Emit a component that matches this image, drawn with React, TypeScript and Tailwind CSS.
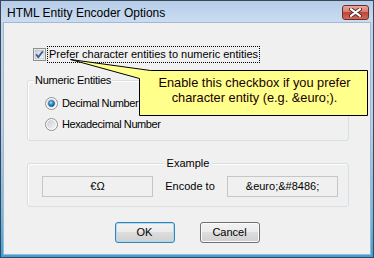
import React from 'react';

function CheckBox() {
  return (
    <svg width="13" height="13" viewBox="0 0 13 13" className="shrink-0">
      <defs>
        <linearGradient id="cbfill" x1="0" y1="0" x2="1" y2="1">
          <stop offset="0" stopColor="#cbcfd5" />
          <stop offset="1" stopColor="#f7f7f7" />
        </linearGradient>
      </defs>
      <rect x="0.5" y="0.5" width="12" height="12" fill="#fff" stroke="#8e8f8f" />
      <rect x="2" y="2" width="9" height="9" fill="url(#cbfill)" stroke="#a8aaad" strokeWidth="0.6" />
      <path d="M3.2 6.4 L5.3 9.2 L9.8 3.2" fill="none" stroke="#3a5aa0" strokeWidth="1.8" strokeLinejoin="round" />
    </svg>
  );
}

function Radio({ checked }: { checked?: boolean }) {
  return (
    <svg width="13" height="13" viewBox="0 0 13 13" className="shrink-0">
      <defs>
        <linearGradient id="rbfill" x1="0" y1="0" x2="1" y2="1">
          <stop offset="0" stopColor="#c9ccd1" />
          <stop offset="1" stopColor="#f8f8f8" />
        </linearGradient>
        <radialGradient id="rbdot" cx="0.4" cy="0.35" r="0.7">
          <stop offset="0" stopColor="#9ae0ff" />
          <stop offset="0.5" stopColor="#2a8fd0" />
          <stop offset="1" stopColor="#0b4f89" />
        </radialGradient>
      </defs>
      <circle cx="6.5" cy="6.5" r="6" fill="#fff" stroke="#8e8f8f" />
      <circle cx="6.5" cy="6.5" r="4.6" fill="url(#rbfill)" />
      {checked && <circle cx="6.5" cy="6.5" r="3.1" fill="url(#rbdot)" stroke="#1b4f7e" strokeWidth="0.6" />}
    </svg>
  );
}

function Button({ label, focused }: { label: string; focused?: boolean }) {
  return (
    <button
      className={`w-[60px] h-[21px] rounded-[3px] border text-[11px] text-black bg-[linear-gradient(#f3f3f3_0%,#ebebeb_45%,#dddddd_50%,#cfcfcf_100%)] ${
        focused ? 'border-[#3c7fb1] shadow-[inset_0_0_0_1px_#a6def8]' : 'border-[#707070] shadow-[inset_0_0_0_1px_#fbfbfb]'
      }`}
    >
      {label}
    </button>
  );
}

export default function App() {
  return (
    <div className="relative w-[374px] h-[258px] flex flex-col border border-[#3b4756] bg-[linear-gradient(#c3d6ee_0%,#b8cfea_50%,#6fb7e0_85%,#2fa4dc_100%)] font-['Liberation_Sans',Arial,sans-serif] text-black">
      {/* title bar */}
      <div className="h-[21px] flex items-start justify-between pl-[6px] pr-[4px] bg-[linear-gradient(#b6cde8,#cadcf1)]">
        <span className="mt-[4px] text-[12px] leading-[16px]">HTML Entity Encoder Options</span>
        <div className="mt-[4px] w-[27px] h-[15px] rounded-[3px] border border-[#6e2d2d] bg-[linear-gradient(#e8a9a0_0%,#d77a6d_45%,#c0453a_50%,#cf6a58_100%)] flex items-center justify-center">
          <svg width="13" height="9" viewBox="0 0 13 9">
            <path d="M2 1.2 L11 7.8 M11 1.2 L2 7.8" stroke="#5a2020" strokeWidth="4" strokeLinecap="round" />
            <path d="M2 1.2 L11 7.8 M11 1.2 L2 7.8" stroke="#fff" strokeWidth="2.2" strokeLinecap="round" />
          </svg>
        </div>
      </div>

      {/* client area */}
      <div className="mx-[2px] mb-[2px] flex-1 border border-[#a3b8d0] bg-[#f0f0f0] flex flex-col text-[11px]">
        <div className="mt-[23px] ml-[29px] h-[17px] flex items-center gap-[1px]">
          <CheckBox />
          <span className="h-[17px] px-[1px] flex items-center border border-dotted border-black leading-[13px]">
            Prefer character entities to numeric entities
          </span>
        </div>

        <div className="relative mt-[17px] ml-[23px] w-[322px] h-[61px] rounded-[3px] border border-[#d5dfe5] shadow-[inset_1px_1px_0_#fff]">
          <span className="absolute -top-[7px] left-[6px] px-[1px] bg-[#f0f0f0] leading-[13px] tracking-[-0.25px]">Numeric Entities</span>
          <div className="pt-[15px] pl-[17px] flex flex-col gap-[6px] tracking-[-0.4px]">
            <div className="h-[15px] flex items-center gap-[4px]">
              <Radio checked />
              <span>Decimal Number</span>
            </div>
            <div className="h-[15px] flex items-center gap-[4px]">
              <Radio />
              <span>Hexadecimal Number</span>
            </div>
          </div>
        </div>

        <div className="relative mt-[22px] ml-[23px] w-[322px] h-[44px] rounded-[3px] border border-[#d5dfe5] shadow-[inset_1px_1px_0_#fff]">
          <span className="absolute -top-[7px] left-1/2 -translate-x-1/2 px-[2px] bg-[#f0f0f0] leading-[13px]">Example</span>
          <div className="pt-[12px] pl-[14px] flex items-center">
            <div className="w-[111px] h-[21px] border border-[#c6c6c6] flex items-center justify-center">€Ω</div>
            <div className="w-[74px] text-center">Encode to</div>
            <div className="w-[111px] h-[21px] border border-[#c6c6c6] flex items-center justify-center">&amp;euro;&amp;#8486;</div>
          </div>
        </div>

        <div className="mt-[15px] flex justify-center gap-[25px]">
          <Button label="OK" focused />
          <Button label="Cancel" />
        </div>
      </div>

      {/* balloon tooltip */}
      <svg className="absolute -left-px -top-px pointer-events-none" width="374" height="258" viewBox="0 0 374 258">
        <path d="M70.5 59.5 L150.5 70.5 L367.5 70.5 L367.5 115.5 L139.5 115.5 L139.5 78.5 Z" fill="#ffff8c" stroke="#000" strokeWidth="1" />
      </svg>
      <div className="absolute left-[139px] top-[70px] w-[229px] h-[46px] pt-[4px] text-center text-[12.8px] leading-[15px] text-[#1a0000] pointer-events-none">
        Enable this checkbox if you prefer
        <br />
        character entity (e.g. &amp;euro;).
      </div>
    </div>
  );
}
